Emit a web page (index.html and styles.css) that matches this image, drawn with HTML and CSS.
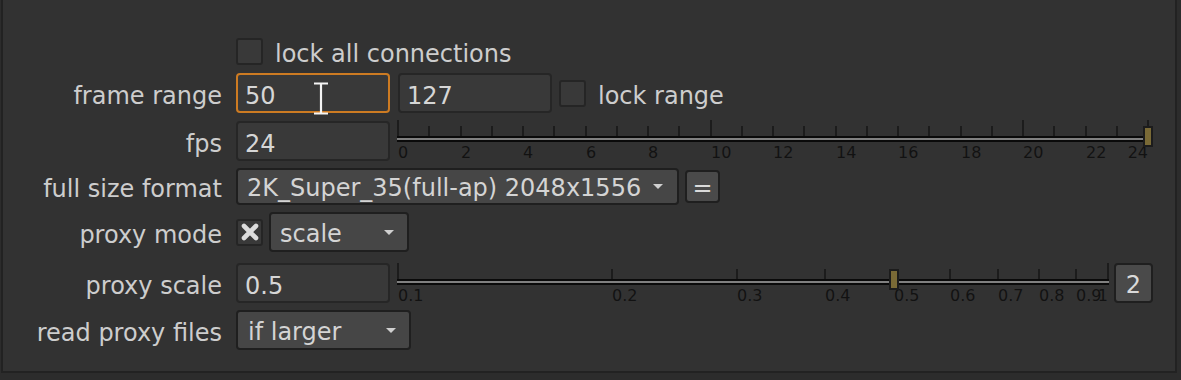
FILE: index.html
```html
<!DOCTYPE html>
<html lang="en">
<head>
    <meta charset="UTF-8">
    <title>Project Settings</title>
    <link rel="stylesheet" href="styles.css">
</head>
<body>
    <div class="panel">
        <div class="row row-lock">
            <div class="label"></div>
            <div class="field">
                <span class="check"></span>
                <span class="check-text">lock all connections</span>
            </div>
        </div>

        <div class="row row-frame">
            <div class="label">frame range</div>
            <div class="field">
                <div class="input focused">50
                    <svg class="ibeam" width="16" height="33" viewBox="0 0 16 33">
                        <path d="M1 1.5h14M8 1.5v30M1 31.5h14" stroke="#f4f4f4" stroke-width="2.2" fill="none"/>
                    </svg>
                </div>
                <div class="input">127</div>
                <span class="check check-range"></span>
                <span class="check-text">lock range</span>
            </div>
        </div>

        <div class="row row-fps">
            <div class="label">fps</div>
            <div class="field">
                <div class="input">24</div>
                <div class="slider slider-fps" id="fpsSlider">
                    <div class="track"></div>
                </div>
            </div>
        </div>

        <div class="row row-format">
            <div class="label">full size format</div>
            <div class="field field-tight">
                <div class="dropdown dropdown-format">2K_Super_35(full-ap) 2048x1556</div>
                <div class="btn btn-eq">=</div>
            </div>
        </div>

        <div class="row row-mode">
            <div class="label">proxy mode</div>
            <div class="field field-tight">
                <span class="check checked">
                    <svg width="18" height="18" viewBox="0 0 18 18">
                        <path d="M3 3L15 15M15 3L3 15" stroke="#dcdcdc" stroke-width="4.6" stroke-linecap="round"/>
                    </svg>
                </span>
                <div class="dropdown dropdown-scale">scale</div>
            </div>
        </div>

        <div class="row row-scale">
            <div class="label">proxy scale</div>
            <div class="field">
                <div class="input">0.5</div>
                <div class="slider slider-scale" id="scaleSlider">
                    <div class="track"></div>
                </div>
                <div class="btn btn-two">2</div>
            </div>
        </div>

        <div class="row row-read">
            <div class="label">read proxy files</div>
            <div class="field">
                <div class="dropdown dropdown-read">if larger</div>
            </div>
        </div>
    </div>

    <script>
        // 刻度数据
        var fpsTicks = [];
        for (var i = 0; i <= 24; i++) fpsTicks.push(i);
        var scaleTicks = [0.1, 0.2, 0.3, 0.4, 0.5, 0.6, 0.7, 0.8, 0.9, 1];

        var sliders = [
            {
                id: 'fpsSlider',
                width: 750,
                ticks: fpsTicks,
                major: [0, 10, 20, 24],
                labels: fpsTicks.filter(function(v) { return v % 2 === 0; }),
                value: 24,
                pos: function(v) { return v / 24; },
                text: function(v) { return String(v); }
            },
            {
                id: 'scaleSlider',
                width: 710,
                ticks: scaleTicks,
                major: [0.1, 1],
                labels: scaleTicks,
                value: 0.5,
                pos: function(v) { return Math.log10(v / 0.1); },
                text: function(v) { return v === 1 ? '1' : v.toFixed(1); }
            }
        ];

        sliders.forEach(function(s) {
            var el = document.getElementById(s.id);
            el.querySelector('.track').style.width = (s.width + 2) + 'px';

            s.ticks.forEach(function(v) {
                var tick = document.createElement('div');
                tick.className = 'tick' + (s.major.indexOf(v) >= 0 ? ' major' : '');
                tick.style.left = Math.round(s.pos(v) * s.width - 1) + 'px';
                el.appendChild(tick);
            });

            s.labels.forEach(function(v, idx) {
                var label = document.createElement('div');
                label.className = 'tick-label' + (idx === s.labels.length - 1 ? ' end' : '');
                label.textContent = s.text(v);
                label.style.left = Math.round(s.pos(v) * s.width) + 'px';
                el.appendChild(label);
            });

            var handle = document.createElement('div');
            handle.className = 'handle';
            handle.style.left = Math.round(s.pos(s.value) * s.width - 5) + 'px';
            el.appendChild(handle);
        });
    </script>
</body>
</html>
```

FILE: styles.css
```css
* {
    margin: 0;
    padding: 0;
    box-sizing: border-box;
}

body {
    font-family: 'DejaVu Sans', 'Liberation Sans', sans-serif;
    font-size: 24px;
    color: #cdcdcd;
    background-color: #2c2c2c;
}

.panel {
    margin: 0 4px 0 1px;
    padding: 31px 0 21px;
    background-color: #323232;
    border: 2px solid #222;
    border-top: none;
}

.row {
    display: flex;
    align-items: center;
    height: 40px;
    margin-top: 6px;
}

.row-lock {
    margin-top: 0;
}

.row-frame {
    margin-top: 2px;
}

.row-fps {
    margin-top: 8px;
}

.row-format {
    margin-top: 5px;
}

.row-scale {
    margin-top: 11px;
}

.row-read {
    margin-top: 7px;
}

.label {
    width: 219px;
    margin-right: 14px;
    padding-top: 5px;
    text-align: right;
    white-space: nowrap;
}

.field {
    display: flex;
    align-items: center;
    gap: 8px;
}

.field-tight {
    gap: 6px;
}

/* 输入框 */
.input {
    position: relative;
    width: 154px;
    height: 40px;
    padding: 5px 0 0 7px;
    display: flex;
    align-items: center;
    background: #393939;
    border: 2px solid #262626;
    border-radius: 4px;
    color: #d6d6d6;
}

.input.focused {
    border-color: #cd7b22;
}

.ibeam {
    position: absolute;
    left: 75px;
    top: 7px;
}

/* 勾选框 */
.check {
    width: 27px;
    height: 27px;
    display: flex;
    align-items: center;
    justify-content: center;
    background: #393939;
    border: 2px solid #252525;
    border-radius: 3px;
}

.check-range {
    margin-left: -1px;
}

.check-text {
    margin-left: 4px;
    padding-top: 5px;
    white-space: nowrap;
}

/* 下拉框 */
.dropdown {
    height: 40px;
    padding: 4px 13px 0 9px;
    display: flex;
    align-items: center;
    justify-content: space-between;
    background: #464646;
    border: 2px solid #1f1f1f;
    border-radius: 4px;
    color: #d4d4d4;
    white-space: nowrap;
}

.dropdown::after {
    content: "";
    margin-top: -4px;
    border-left: 5px solid transparent;
    border-right: 5px solid transparent;
    border-top: 5px solid #d0d0d0;
}

.dropdown-format {
    width: 443px;
    height: 37px;
    padding-right: 14px;
}

.dropdown-scale {
    width: 140px;
}

.dropdown-read {
    width: 175px;
    padding-left: 10px;
}

.btn {
    display: flex;
    align-items: center;
    justify-content: center;
    padding-top: 4px;
    background: #4a4a4a;
    border: 2px solid #1f1f1f;
    border-radius: 4px;
    color: #dadada;
}

.btn-eq {
    width: 35px;
    height: 33px;
}

.btn-two {
    width: 39px;
    height: 40px;
    margin-left: -3px;
}

/* 滑块 */
.slider {
    position: relative;
    height: 40px;
}

.slider-fps {
    width: 751px;
}

.slider-scale {
    width: 711px;
    margin-top: 2px;
}

.track {
    position: absolute;
    left: -1px;
    top: 15px;
    height: 6px;
    background: linear-gradient(#0a0a0a 0 2px, #808080 2px 4px, #0a0a0a 4px 6px);
}

.tick {
    position: absolute;
    top: 5px;
    width: 2px;
    height: 10px;
    background: #1c1c1c;
}

.tick.major {
    top: -1px;
    height: 16px;
}

.tick-label {
    position: absolute;
    top: 24px;
    font-size: 16px;
    line-height: 16px;
    color: #121212;
    white-space: nowrap;
}

.tick-label.end {
    transform: translateX(-100%);
}

.handle {
    position: absolute;
    top: 5px;
    width: 10px;
    height: 21px;
    background: #7a6a36;
    border: 2px solid #1c1c1c;
}
```
